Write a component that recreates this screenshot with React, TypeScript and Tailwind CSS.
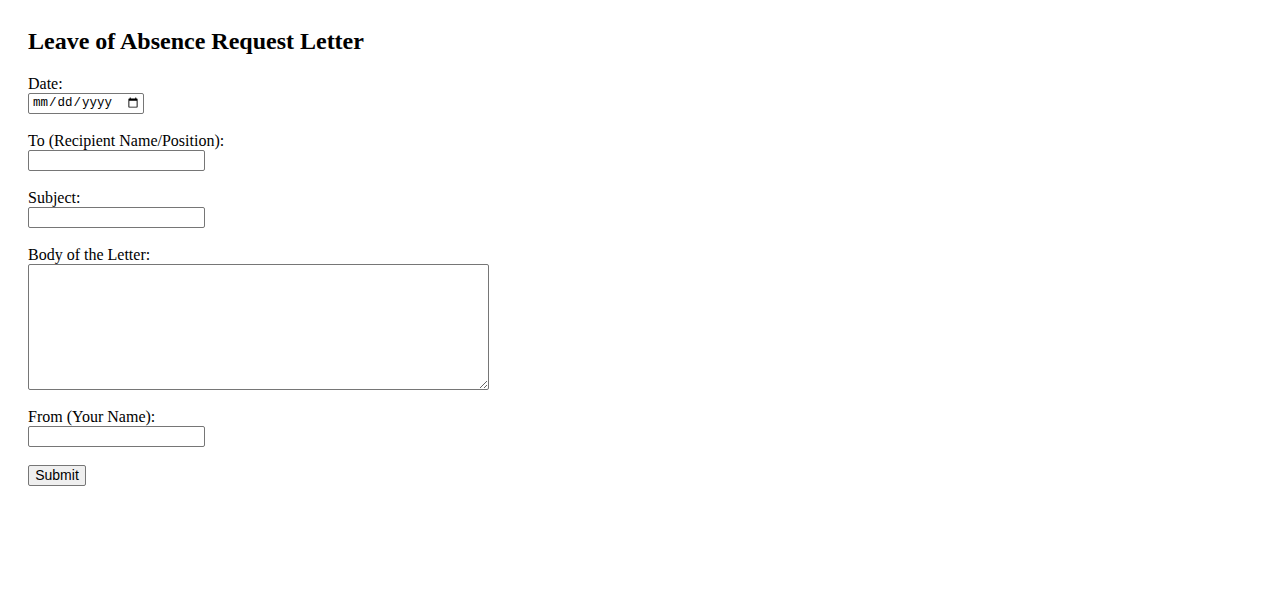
export default function App() {
  const field = "block w-[177px] h-[21px] border border-[#767676] rounded-[2px] px-[2px] text-[13.333px] font-['Liberation_Sans',Arial,sans-serif] bg-white";

  return (
    <div className="min-h-screen bg-white text-black font-['Liberation_Serif','Times_New_Roman',serif] text-[16px]">
      <div className="pt-[28px] px-[28px]">
        <h2 className="text-[24px] font-bold leading-[27.6px] mb-[19px]">Leave of Absence Request Letter</h2>
        <form onSubmit={(e) => e.preventDefault()}>
          <div className="mb-[18px]">
            <label className="block leading-[18px]">Date:</label>
            <input
              type="date"
              className="block w-[116px] h-[21px] border border-[#767676] rounded-[2px] pl-[3px] pr-[2px] text-[12.5px] font-['Liberation_Mono',monospace] bg-white"
            />
          </div>

          <div className="mb-[18px]">
            <label className="block leading-[18px]">To (Recipient Name/Position):</label>
            <input type="text" className={field} />
          </div>

          <div className="mb-[18px]">
            <label className="block leading-[18px]">Subject:</label>
            <input type="text" className={field} />
          </div>

          <div className="mb-[18px]">
            <label className="block leading-[18px]">Body of the Letter:</label>
            <textarea className="block w-[461px] h-[126px] border border-[#767676] rounded-[2px] p-[2px] text-[13.333px] font-['Liberation_Mono',monospace] bg-white resize" />
          </div>

          <div className="mb-[18px]">
            <label className="block leading-[18px]">From (Your Name):</label>
            <input type="text" className={field} />
          </div>

          <button
            type="submit"
            className="block w-[58px] h-[21px] border border-[#767676] rounded-[2px] bg-[#efefef] text-[14px] font-['Liberation_Sans',Arial,sans-serif] leading-none"
          >
            Submit
          </button>
        </form>
      </div>
    </div>
  );
}
